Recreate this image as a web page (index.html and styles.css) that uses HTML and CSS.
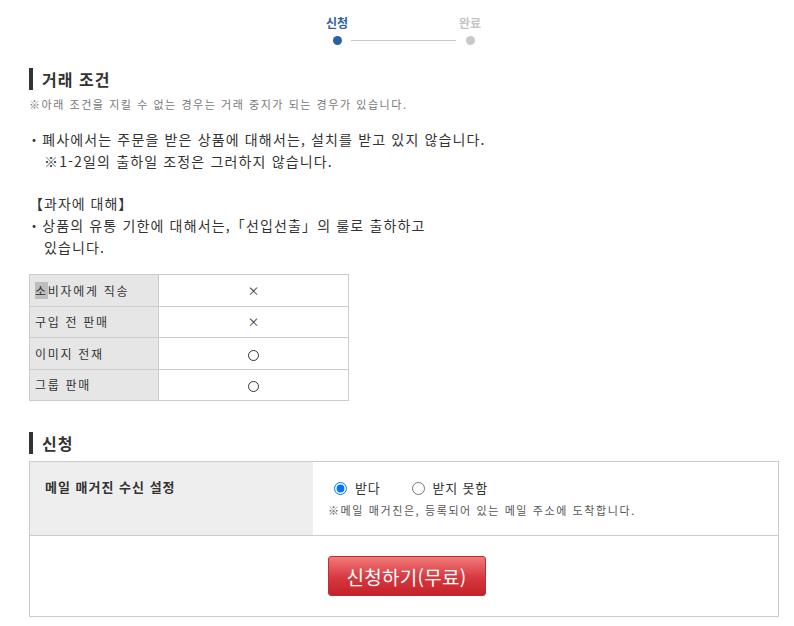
FILE: index.html
```html
<!DOCTYPE html>
<html lang="ko">
<head>
<meta charset="utf-8">
<link rel="stylesheet" href="styles.css">
</head>
<body>
<div class="page">
  <div class="steps">
    <div class="step active"><span class="label">신청</span><span class="dot"></span></div>
    <div class="line"></div>
    <div class="step"><span class="label">완료</span><span class="dot"></span></div>
  </div>

  <h2 class="heading">거래 조건</h2>
  <p class="note">※아래 조건을 지킬 수 없는 경우는 거래 중지가 되는 경우가 있습니다.</p>

  <div class="terms">
    <p class="item">・폐사에서는 주문을 받은 상품에 대해서는, 설치를 받고 있지 않습니다.</p>
    <p class="sub">※1-2일의 출하일 조정은 그러하지 않습니다.</p>
    <p class="group">【과자에 대해】</p>
    <p class="item">・상품의 유통 기한에 대해서는,「선입선출」의 룰로 출하하고</p>
    <p class="sub2">있습니다.</p>
  </div>

  <table class="cond">
    <tr><th><span class="hl">소</span>비자에게 직송</th><td>×</td></tr>
    <tr><th>구입 전 판매</th><td>×</td></tr>
    <tr><th>이미지 전재</th><td><span class="circle"></span></td></tr>
    <tr><th>그룹 판매</th><td><span class="circle"></span></td></tr>
  </table>

  <h2 class="heading h2">신청</h2>
  <div class="form">
    <div class="row">
      <div class="lab">메일 매거진 수신 설정</div>
      <div class="val">
        <div class="radios">
          <label class="radio"><input type="radio" name="mz" checked> 받다</label>
          <label class="radio"><input type="radio" name="mz"> 받지 못함</label>
        </div>
        <p class="small">※메일 매거진은, 등록되어 있는 메일 주소에 도착합니다.</p>
      </div>
    </div>
    <div class="submit">
      <button class="btn" type="button">신청하기(무료)</button>
    </div>
  </div>
</div>
</body>
</html>
```

FILE: styles.css
```css
* { box-sizing: border-box; }
body {
  margin: 0;
  font-family: "Noto Sans CJK KR", "Noto Sans", sans-serif;
  color: #333;
  background: #fff;
}
.page {
  padding: 12px 16px 0 29px;
  width: 794px;
}
.steps {
  display: flex;
  justify-content: center;
  align-items: flex-start;
  margin-left: -29px;
  margin-right: -16px;
  padding-left: 13px;
  height: 46px;
}
.step {
  display: flex;
  flex-direction: column;
  align-items: center;
  width: 30px;
}
.step .label {
  font-size: 12px;
  line-height: 20px;
  font-weight: bold;
  color: #c4c4c4;
  margin-top: 1px;
}
.step.active .label { color: #2d5fa6; }
.step .dot {
  width: 9px;
  height: 9px;
  border-radius: 50%;
  background: #c8c8c8;
  margin-top: 3px;
}
.step.active .dot { background: #2d5fa6; }
.line {
  width: 105px;
  height: 1px;
  background: #c8c8c8;
  margin: 28px -1px 0;
}
.heading {
  margin: 10px 0 0;
  border-left: 4px solid #333;
  padding-left: 9px;
  font-size: 16px;
  font-weight: bold;
  line-height: 22px;
  letter-spacing: 1px;
  color: #333;
}
.note {
  margin: 5px 0 0;
  font-size: 11px;
  line-height: 18px;
  letter-spacing: 1.55px;
  color: #777;
}
.terms {
  margin-top: 15px;
  font-size: 14px;
  line-height: 22px;
  letter-spacing: 1.15px;
  color: #333;
}
.terms p { margin: 0; }
.terms .item { margin-left: -2px; }
.terms .sub { padding-left: 15px; }
.terms .group { margin-top: 20px; letter-spacing: 1px; }
.terms .sub2 { padding-left: 15px; }
.cond {
  margin-top: 16px;
  border-collapse: collapse;
  width: 320px;
  font-size: 12px;
}
.cond th, .cond td {
  border: 1px solid #ccc;
  height: 31.5px;
  padding: 0;
}
.cond th {
  width: 129px;
  background: #e6e6e6;
  text-align: left;
  font-weight: normal;
  padding-left: 5px;
  letter-spacing: 1.7px;
  color: #333;
}
.cond td {
  text-align: center;
  color: #333;
}
.hl { background: #bdbdbd; }
.circle {
  display: inline-block;
  width: 11px;
  height: 11px;
  border: 1px solid #333;
  border-radius: 50%;
  vertical-align: middle;
}
.h2 { margin-top: 31px; }
.form {
  margin-top: 7px;
  border: 1px solid #ccc;
  width: 750px;
}
.row {
  display: flex;
  border-bottom: 1px solid #ccc;
  height: 74px;
}
.lab {
  width: 283px;
  background: #eee;
  font-size: 13px;
  font-weight: bold;
  padding: 15px 0 0 15px;
  line-height: 20px;
  letter-spacing: 1px;
}
.val {
  padding: 16px 0 0 15px;
}
.radios {
  display: flex;
  gap: 31px;
  padding-left: 6px;
  font-size: 13px;
  line-height: 20px;
  letter-spacing: 0.8px;
}
.radio {
  display: flex;
  align-items: center;
  gap: 8px;
}
.radio input {
  margin: 0;
  width: 13px;
  height: 13px;
  accent-color: #0075ff;
}
.small {
  margin: 4px 0 0;
  font-size: 11px;
  line-height: 16px;
  letter-spacing: 1.6px;
  color: #555;
}
.submit {
  height: 80px;
  display: flex;
  justify-content: center;
  align-items: center;
  padding-left: 5px;
}
.btn {
  width: 158px;
  height: 40px;
  border: 1px solid #c22b33;
  border-radius: 3px;
  background: linear-gradient(#f27a7a, #d6383f 55%, #c4222b);
  color: #fff;
  font-family: "Noto Sans CJK KR", sans-serif;
  font-size: 19px;
  letter-spacing: 0.3px;
  padding: 0;
}
```
